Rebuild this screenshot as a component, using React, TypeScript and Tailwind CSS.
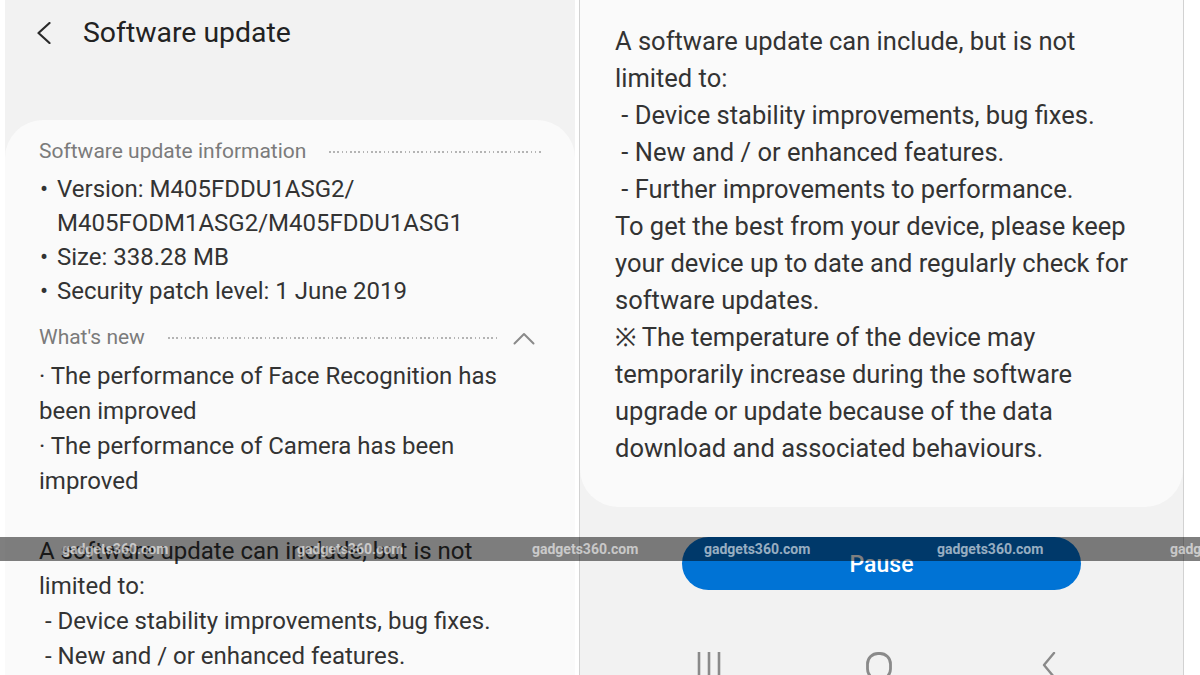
import React from 'react';

const Dots: React.FC<{ className?: string }> = ({ className }) => (
  <div
    className={
      'h-[2px] bg-[repeating-linear-gradient(90deg,#b4b4b4_0_1.6px,transparent_1.6px_4.2px)] ' + (className ?? '')
    }
  />
);

const leftNew = [
  '· The performance of Face Recognition has',
  'been improved',
  '· The performance of Camera has been',
  'improved',
  '',
  'A software update can include, but is not',
  'limited to:',
  ' - Device stability improvements, bug fixes.',
  ' - New and / or enhanced features.',
];

const rightLines = [
  'A software update can include, but is not',
  'limited to:',
  ' - Device stability improvements, bug fixes.',
  ' - New and / or enhanced features.',
  ' - Further improvements to performance.',
  'To get the best from your device, please keep',
  'your device up to date and regularly check for',
  'software updates.',
  '※ The temperature of the device may',
  'temporarily increase during the software',
  'upgrade or update because of the data',
  'download and associated behaviours.',
];

const marks = [62, 297, 532, 704, 937, 1170];

export default function App() {
  return (
    <div className="relative flex h-[675px] w-[1200px] overflow-hidden bg-white [font-family:Roboto,'Liberation_Sans',sans-serif]">
      <div className="w-[5px] shrink-0" />

      {/* left phone screen */}
      <div className="flex w-[570px] shrink-0 flex-col bg-[#f2f2f2]">
        <div className="flex h-[66px] shrink-0 items-center pl-[32px]">
          <svg width="14" height="22" viewBox="0 0 14 22" fill="none">
            <path d="M12.5 1 L1.5 11 L12.5 21" stroke="#2a2a2a" strokeWidth="2.2" strokeLinecap="round" strokeLinejoin="round" />
          </svg>
          <span className="ml-[32px] text-[28.4px] leading-none text-[#222]">Software update</span>
        </div>
        <div className="h-[54px] shrink-0" />
        <div className="flex-1 rounded-t-[38px] bg-[#fafafa] px-[34px] pt-[18px]">
          <div className="flex h-[28px] items-center">
            <span className="text-[21px] text-[#7b7b7b]">Software update information</span>
            <Dots className="ml-[23px] flex-1" />
          </div>
          <ul className="mt-[6px] text-[24px] leading-[34px] text-[#333]">
            <li className="flex">
              <span className="w-[18px] shrink-0 pl-[1px]">•</span>
              <span>
                Version: M405FDDU1ASG2/
                <br />
                M405FODM1ASG2/M405FDDU1ASG1
              </span>
            </li>
            <li className="flex">
              <span className="w-[18px] shrink-0 pl-[1px]">•</span>
              <span>Size: 338.28 MB</span>
            </li>
            <li className="flex">
              <span className="w-[18px] shrink-0 pl-[1px]">•</span>
              <span>Security patch level: 1 June 2019</span>
            </li>
          </ul>
          <div className="mt-[16px] flex h-[28px] items-center">
            <span className="text-[21px] text-[#7b7b7b]">What's new</span>
            <Dots className="ml-[23px] flex-1" />
            <svg className="ml-[14px] mr-[6px]" width="22" height="13" viewBox="0 0 22 13" fill="none">
              <path d="M1.5 11.5 L11 2 L20.5 11.5" stroke="#8a8a8a" strokeWidth="2" strokeLinecap="round" strokeLinejoin="round" />
            </svg>
          </div>
          <div className="mt-[7px] text-[24px] leading-[35px] text-[#333]">
            {leftNew.map((l, i) => (
              <div key={i} className="h-[35px] whitespace-pre">
                {l}
              </div>
            ))}
          </div>
        </div>
      </div>

      <div className="w-[4px] shrink-0" />

      {/* right phone screen */}
      <div className="flex w-[605px] shrink-0 flex-col border-x border-[#d2d2d2] bg-[#f2f2f2]">
        <div className="h-[507px] shrink-0 rounded-b-[38px] bg-[#fafafa] pl-[35px] pt-[23px] text-[25.5px] leading-[37px] text-[#333]">
          {rightLines.map((l, i) => (
            <div key={i} className="h-[37px] whitespace-pre">
              {l}
            </div>
          ))}
        </div>
        <button className="mx-auto mt-[30px] flex h-[53px] w-[399px] shrink-0 items-center justify-center rounded-full bg-[#0073d5] pt-[4px] text-[23px] font-medium text-white">
          Pause
        </button>
        <div className="mt-[62px] flex shrink-0 gap-[110px] pl-[99px]">
          <div className="flex w-[60px] justify-center">
            <svg width="24" height="26" viewBox="0 0 24 26" fill="none">
              <path d="M2 0 V26 M12 0 V26 M22 0 V26" stroke="#8a8a8a" strokeWidth="2.6" />
            </svg>
          </div>
          <div className="flex w-[60px] justify-center">
            <svg width="26" height="28" viewBox="0 0 26 28" fill="none">
              <rect x="1.5" y="1.5" width="23" height="26" rx="10.5" stroke="#8a8a8a" strokeWidth="2.8" />
            </svg>
          </div>
          <div className="flex w-[60px] justify-center">
            <svg width="14" height="28" viewBox="0 0 14 28" fill="none">
              <path d="M12 1 L2 13 L12 25" stroke="#8a8a8a" strokeWidth="2.4" strokeLinecap="round" strokeLinejoin="round" />
            </svg>
          </div>
        </div>
      </div>

      {/* watermark band */}
      <div className="absolute left-0 top-[537px] h-[24px] w-full bg-black/50">
        {marks.map((x) => (
          <span
            key={x}
            className="absolute top-0 text-[14px] font-bold leading-[24px] text-white/60 [font-family:Roboto,'Liberation_Sans',sans-serif]"
            style={{ left: x }}
          >
            gadgets360.com
          </span>
        ))}
      </div>
    </div>
  );
}
